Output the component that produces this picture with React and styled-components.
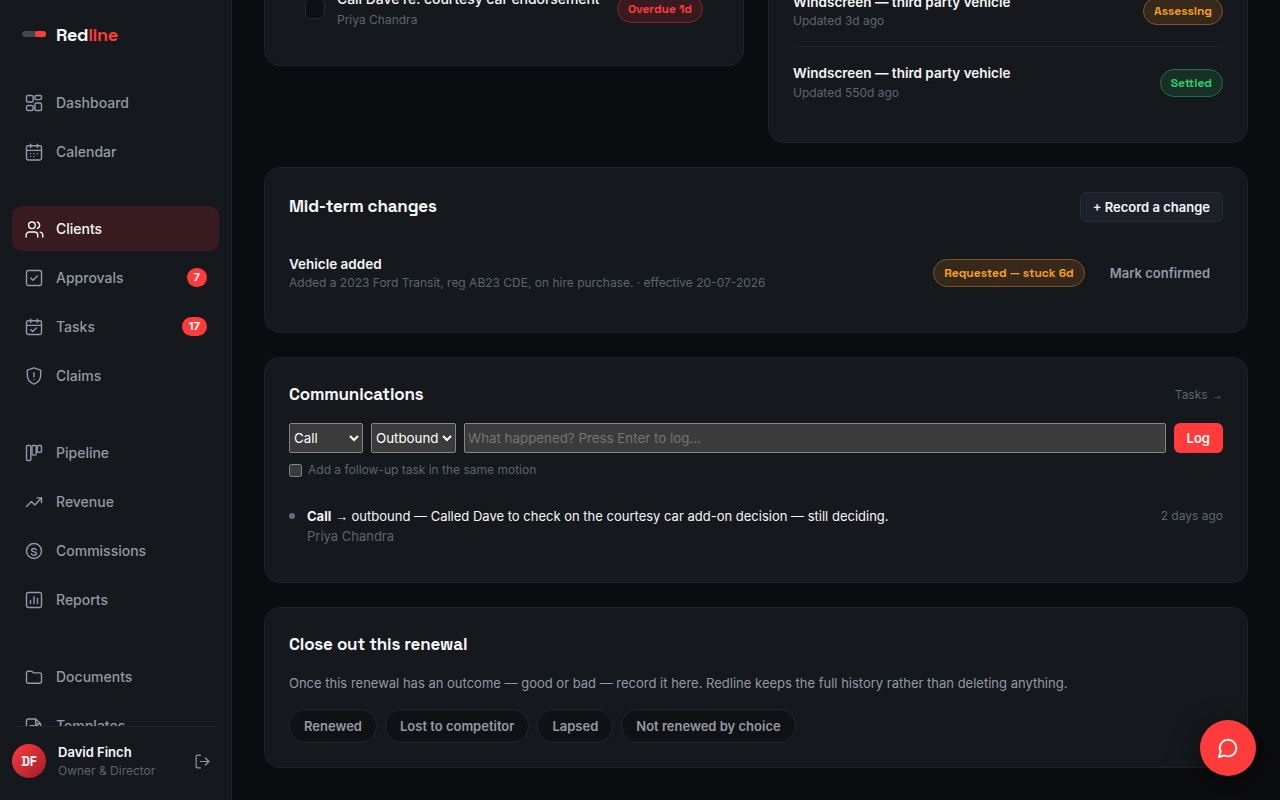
import React, { useState } from "react";
import styled, { createGlobalStyle, css } from "styled-components";

const colors = {
  page: "#0b0c0f",
  panel: "#15181c",
  line: "#1f2329",
  text: "#f5f6f8",
  soft: "#9499a5",
  muted: "#5f646f",
  red: "#ff3b3b",
};

const display = `"Space Grotesk", Inter, sans-serif`;

const icons = {
  dashboard: (
    <>
      <rect x="3" y="3" width="8" height="7.8" rx="1.8" />
      <rect x="13.1" y="3" width="7.9" height="4.9" rx="1.8" />
      <rect x="3" y="15" width="8" height="6" rx="1.8" />
      <rect x="13.1" y="12" width="7.9" height="9" rx="1.8" />
    </>
  ),
  calendar: (
    <>
      <rect x="3" y="4.5" width="18" height="17" rx="2" />
      <path d="M8 2.5v4M16 2.5v4M3 10h18M8 14h.01M12 14h.01M16 14h.01M8 17.5h.01M12 17.5h.01" />
    </>
  ),
  clients: (
    <>
      <circle cx="9.5" cy="7.5" r="4" />
      <path d="M2.5 21.5v-2a4 4 0 0 1 4-4h6a4 4 0 0 1 4 4v2M16 3.7a4 4 0 0 1 0 7.6M22.5 21.5v-2a4 4 0 0 0-3-3.8" />
    </>
  ),
  approvals: (
    <>
      <rect x="3" y="3" width="18" height="18" rx="2" />
      <path d="m8 12 2.8 2.8L16 9.5" />
    </>
  ),
  tasks: (
    <>
      <rect x="3" y="4.5" width="18" height="16.5" rx="2" />
      <path d="M8 2.5v4M16 2.5v4M3 10h18M8.2 15.3l2.2 2.2 4.4-4.3" />
    </>
  ),
  claims: (
    <>
      <path d="M12 2.2 20 5v6.2c0 5-3.3 8.8-8 10.6-4.7-1.8-8-5.6-8-10.6V5z" />
      <path d="M12 8v5M12 16.3h.01" />
    </>
  ),
  pipeline: (
    <>
      <rect x="3" y="3" width="5.2" height="18" rx="1.2" />
      <rect x="9.6" y="3" width="5" height="11.5" rx="1.2" />
      <rect x="16" y="3" width="5" height="8" rx="1.2" />
    </>
  ),
  revenue: <path d="m3 17.5 6-6 4 4L21 7M15.5 7H21v5.5" />,
  commissions: (
    <>
      <circle cx="12" cy="12" r="9" />
      <path d="M14.8 10.6c-.3-1-1.4-1.6-2.8-1.6-1.6 0-2.8.8-2.8 2 0 2.9 5.8 1.3 5.8 4 0 1.3-1.3 2.1-3 2.1-1.5 0-2.7-.7-3-1.7" />
    </>
  ),
  reports: (
    <>
      <rect x="3" y="3" width="18" height="18" rx="2" />
      <path d="M7.8 12.5v3.7M12 8v8.2M16.2 10v6.2" />
    </>
  ),
  documents: (
    <path d="M3 7a2 2 0 0 1 2-2h3.6a2 2 0 0 1 1.5.7L11.4 7H19a2 2 0 0 1 2 2v8.5a2 2 0 0 1-2 2H5a2 2 0 0 1-2-2z" />
  ),
  templates: (
    <path d="M14 3.5H5a2 2 0 0 0-2 2V20a2 2 0 0 0 2 2h13a2 2 0 0 0 2-2V9.5zM14 3.5v6h6M7.5 11.5h9" />
  ),
  logout: <path d="M9 21H5a2 2 0 0 1-2-2V5a2 2 0 0 1 2-2h4M16 17l5-5-5-5M21 12H9" />,
  chat: <path d="M7.9 20A9 9 0 1 0 4 16.1L2 22Z" />,
};

const Icon = ({ name, size = 20, weight = 1.7 }) => (
  <IconStyled
    width={size}
    height={size}
    viewBox="0 0 24 24"
    fill="none"
    stroke="currentColor"
    strokeWidth={weight}
    strokeLinecap="round"
    strokeLinejoin="round"
  >
    {icons[name]}
  </IconStyled>
);

const groups = [
  [
    { icon: "dashboard", label: "Dashboard" },
    { icon: "calendar", label: "Calendar" },
  ],
  [
    { icon: "clients", label: "Clients" },
    { icon: "approvals", label: "Approvals", count: 7 },
    { icon: "tasks", label: "Tasks", count: 17 },
    { icon: "claims", label: "Claims" },
  ],
  [
    { icon: "pipeline", label: "Pipeline" },
    { icon: "revenue", label: "Revenue" },
    { icon: "commissions", label: "Commissions" },
    { icon: "reports", label: "Reports" },
  ],
  [
    { icon: "documents", label: "Documents" },
    { icon: "templates", label: "Templates" },
  ],
];

const claims = [
  { title: "Windscreen — third party vehicle", meta: "Updated 3d ago", status: "Assessing", tone: "amber" },
  { title: "Windscreen — third party vehicle", meta: "Updated 550d ago", status: "Settled", tone: "green" },
];

const outcomes = ["Renewed", "Lost to competitor", "Lapsed", "Not renewed by choice"];

const Sidebar = () => {
  const [active, setActive] = useState("Clients");
  return (
    <SidebarStyled>
      <Brand>
        <BrandMark />
        <BrandName>
          Red<em>line</em>
        </BrandName>
      </Brand>
      <Nav>
        {groups.map((items, i) => (
          <NavGroup key={i}>
            {items.map(({ icon, label, count }) => (
              <NavItem
                key={label}
                $active={active === label}
                onClick={() => setActive(label)}
              >
                <Icon name={icon} />
                <span>{label}</span>
                {count && <Count>{count}</Count>}
              </NavItem>
            ))}
          </NavGroup>
        ))}
      </Nav>
      <Account>
        <Avatar>DF</Avatar>
        <AccountText>
          <strong>David Finch</strong>
          <span>Owner &amp; Director</span>
        </AccountText>
        <LogoutButton aria-label="Log out">
          <Icon name="logout" size={17} />
        </LogoutButton>
      </Account>
    </SidebarStyled>
  );
};

const Communications = () => {
  const [note, setNote] = useState("");
  return (
    <Card $height={226}>
      <CardHeader $height={25} $gap={16}>
        <CardTitle>Communications</CardTitle>
        <CardLink>
          Tasks <Arrow>→</Arrow>
        </CardLink>
      </CardHeader>
      <LogForm onSubmit={(e) => e.preventDefault()}>
        <Select $width={74} defaultValue="Call">
          <option>Call</option>
        </Select>
        <Select $width={85} defaultValue="Outbound">
          <option>Outbound</option>
        </Select>
        <NoteInput
          value={note}
          onChange={(e) => setNote(e.target.value)}
          placeholder="What happened? Press Enter to log..."
        />
        <Button $kind="primary">Log</Button>
      </LogForm>
      <FollowUp>
        <input type="checkbox" />
        <span>Add a follow-up task in the same motion</span>
      </FollowUp>
      <Entry>
        <EntryDot />
        <EntryBody>
          <p>
            <strong>Call</strong> <Arrow>→</Arrow> outbound — Called Dave to
            check on the courtesy car add-on decision — still deciding.
          </p>
          <small>Priya Chandra</small>
        </EntryBody>
        <EntryTime>2 days ago</EntryTime>
      </Entry>
    </Card>
  );
};

const App = () => (
  <Layout>
    <GlobalStyle />
    <Sidebar />
    <Main>
      <Columns>
        <Card $height={106} $bottom>
          <TaskRow>
            <TaskCheck />
            <RowText $gap={3}>
              <TaskTitle>Call Dave re: courtesy car endorsement</TaskTitle>
              <RowMeta>Priya Chandra</RowMeta>
            </RowText>
            <Pill $tone="red">Overdue 1d</Pill>
          </TaskRow>
        </Card>
        <Card $height={183} $bottom>
          {claims.map(({ title, meta, status, tone }, i) => (
            <Row key={status}>
              <RowText $gap={i && 1} $lift={i && 1}>
                <RowTitle>{title}</RowTitle>
                <RowMeta>{meta}</RowMeta>
              </RowText>
              <Pill $tone={tone}>{status}</Pill>
            </Row>
          ))}
        </Card>
      </Columns>
      <Card $height={166}>
        <CardHeader $height={30} $gap={16}>
          <CardTitle>Mid-term changes</CardTitle>
          <Button>+ Record a change</Button>
        </CardHeader>
        <Row>
          <RowText>
            <RowTitle>Vehicle added</RowTitle>
            <RowMeta>
              Added a 2023 Ford Transit, reg AB23 CDE, on hire purchase. ·
              effective 20-07-2026
            </RowMeta>
          </RowText>
          <Pill $tone="amber">Requested — stuck 6d</Pill>
          <Button $kind="ghost">Mark confirmed</Button>
        </Row>
      </Card>
      <Communications />
      <Card $height={161}>
        <CardHeader $height={25} $gap={16}>
          <CardTitle>Close out this renewal</CardTitle>
        </CardHeader>
        <Copy>
          Once this renewal has an outcome — good or bad — record it here.
          Redline keeps the full history rather than deleting anything.
        </Copy>
        <Chips>
          {outcomes.map((label) => (
            <Chip key={label}>{label}</Chip>
          ))}
        </Chips>
      </Card>
    </Main>
    <ChatButton aria-label="Open chat">
      <Icon name="chat" size={22} weight={2} />
    </ChatButton>
  </Layout>
);

export default App;

const GlobalStyle = createGlobalStyle`
  * {
    box-sizing: border-box;
  }
  html {
    color-scheme: dark;
  }
  body {
    margin: 0;
    overflow: hidden;
    background: ${colors.page};
    color: ${colors.text};
    font-family: Inter, sans-serif;
    font-size: 14px;
  }
  button, input, select {
    font-family: inherit;
  }
  p {
    margin: 0;
  }
`;

const Layout = styled.div`
  display: flex;
  height: 100vh;
  overflow: hidden;
`;

const IconStyled = styled.svg`
  display: block;
  flex-shrink: 0;
`;

const Arrow = styled.span`
  font-family: "Liberation Serif", serif;
  line-height: 1;
`;

const SidebarStyled = styled.aside`
  display: flex;
  flex-direction: column;
  flex-shrink: 0;
  width: 232px;
  padding: 24px 12px 22px;
  background: ${colors.panel};
  border-right: 1px solid ${colors.line};
`;

const Brand = styled.div`
  display: flex;
  align-items: center;
  gap: 10px;
  height: 22px;
  padding-left: 10px;
  margin-bottom: 34px;
`;

const BrandMark = styled.span`
  width: 24px;
  height: 6px;
  margin-top: -2px;
  border-radius: 3px;
  background: #45464a;
  &::after {
    content: "";
    display: block;
    width: 11px;
    height: 6px;
    margin-left: auto;
    border-radius: 3px;
    background: ${colors.red};
  }
`;

const BrandName = styled.span`
  margin-top: -2px;
  font-family: ${display};
  font-size: 18px;
  font-weight: 700;
  letter-spacing: -0.36px;
  em {
    font-style: normal;
    color: ${colors.red};
  }
`;

const Nav = styled.nav`
  display: flex;
  flex: 1;
  flex-direction: column;
  gap: 32px;
  min-height: 0;
  overflow: hidden;
`;

const NavGroup = styled.div`
  display: flex;
  flex-direction: column;
  gap: 4px;
`;

const NavItem = styled.a`
  display: flex;
  align-items: center;
  gap: 12px;
  height: 45px;
  padding: 0 12px;
  border-radius: 10px;
  color: ${colors.soft};
  font-size: 14px;
  font-weight: 500;
  cursor: pointer;
  ${(props) =>
    props.$active &&
    css`
      background: #371b1f;
      color: ${colors.text};
    `}
`;

const Count = styled.span`
  margin-left: auto;
  padding: 0 7px;
  border-radius: 10px;
  background: ${colors.red};
  color: #fff;
  font-size: 11px;
  font-weight: 700;
  line-height: 19px;
`;

const Account = styled.div`
  display: flex;
  align-items: center;
  gap: 12px;
  height: 52px;
  padding-top: 17px;
  border-top: 1px solid ${colors.line};
`;

const Avatar = styled.div`
  display: flex;
  align-items: center;
  justify-content: center;
  width: 34px;
  height: 34px;
  border-radius: 50%;
  background: linear-gradient(135deg, #ff3b3b, #9f1d2c);
  color: #fff;
  font-family: ${display};
  font-size: 13px;
  font-weight: 700;
`;

const AccountText = styled.div`
  display: flex;
  flex: 1;
  flex-direction: column;
  strong {
    font-size: 13px;
    font-weight: 600;
    line-height: 19px;
  }
  span {
    color: ${colors.muted};
    font-size: 12px;
    line-height: 18px;
  }
`;

const LogoutButton = styled.button`
  padding: 8px;
  border: 0;
  background: none;
  color: ${colors.soft};
  cursor: pointer;
`;

const Main = styled.main`
  display: flex;
  flex: 1;
  flex-direction: column;
  justify-content: flex-end;
  gap: 24px;
  padding: 0 32px 32px;
`;

const Columns = styled.div`
  display: grid;
  grid-template-columns: 1fr 1fr;
  gap: 24px;
  align-items: start;
`;

const Card = styled.section`
  display: flex;
  flex-direction: column;
  flex-shrink: 0;
  justify-content: ${(props) => (props.$bottom ? "flex-end" : "flex-start")};
  height: ${(props) => props.$height}px;
  padding: 24px;
  border: 1px solid ${colors.line};
  border-radius: 16px;
  background: ${colors.panel};
`;

const CardHeader = styled.header`
  display: flex;
  align-items: center;
  justify-content: space-between;
  height: ${(props) => props.$height}px;
  margin-bottom: ${(props) => props.$gap}px;
`;

const CardTitle = styled.h3`
  margin: 0;
  padding-bottom: 2px;
  font-family: ${display};
  font-size: 17px;
  font-weight: 600;
  letter-spacing: -0.17px;
`;

const CardLink = styled.a`
  color: ${colors.muted};
  font-size: 12px;
`;

const Row = styled.div`
  display: flex;
  align-items: center;
  gap: 12px;
  height: 70px;
  flex-shrink: 0;
  & + & {
    height: 72px;
    padding-top: 1px;
    border-top: 1px solid ${colors.line};
  }
`;

const RowText = styled.div`
  display: flex;
  flex: 1;
  flex-direction: column;
  gap: ${(props) => props.$gap || 0}px;
  padding-bottom: ${(props) => props.$lift || 0}px;
`;

const RowTitle = styled.span`
  font-size: 13.5px;
  font-weight: 600;
  line-height: 20px;
`;

const RowMeta = styled.span`
  color: ${colors.muted};
  font-size: 12px;
  line-height: 18px;
`;

const TaskRow = styled.div`
  display: flex;
  align-items: center;
  gap: 12px;
  flex-shrink: 0;
  padding: 0 16px 12px;
`;

const TaskTitle = styled.span`
  font-size: 14px;
  font-weight: 500;
  letter-spacing: -0.06px;
  line-height: 19px;
`;

const TaskCheck = styled.span`
  width: 20px;
  height: 20px;
  border: 1px solid #262a31;
  border-radius: 5px;
  background: #0e0f12;
`;

const tones = {
  red: ["#ff3b3b", "#371b1f", "#83282c"],
  amber: ["#f59e1f", "#36291c", "#7d561f"],
  green: ["#2ecc6a", "#182f26", "#1f7043"],
};

const Pill = styled.span`
  height: 28px;
  padding: 0 10px;
  border: 1px solid ${(props) => tones[props.$tone][2]};
  border-radius: 14px;
  background: ${(props) => tones[props.$tone][1]};
  color: ${(props) => tones[props.$tone][0]};
  font-family: ${display};
  font-size: 12px;
  font-weight: 700;
  line-height: 26px;
  white-space: nowrap;
`;

const kinds = {
  primary: css`
    background: ${colors.red};
    color: #fff;
  `,
  ghost: css`
    background: none;
    color: ${colors.soft};
  `,
  plain: css`
    border-color: #272b34;
    background: #1c2028;
    color: ${colors.text};
  `,
};

const Button = styled.button`
  height: 30px;
  padding: 0 12px;
  border: 1px solid transparent;
  border-radius: 6px;
  font-size: 13px;
  font-weight: 600;
  white-space: nowrap;
  cursor: pointer;
  ${(props) => kinds[props.$kind || "plain"]}
`;

const LogForm = styled.form`
  display: flex;
  gap: 8px;
  height: 30px;
`;

const Select = styled.select`
  width: ${(props) => props.$width}px;
`;

const NoteInput = styled.input`
  flex: 1;
  min-width: 0;
`;

const FollowUp = styled.label`
  display: flex;
  align-items: center;
  gap: 6px;
  height: 18px;
  margin-top: 8px;
  color: ${colors.muted};
  font-size: 12px;
  input {
    margin: 0;
  }
  span {
    padding-bottom: 2px;
  }
`;

const Entry = styled.div`
  display: flex;
  gap: 12px;
  margin-top: 27px;
`;

const EntryDot = styled.span`
  width: 6px;
  height: 6px;
  margin-top: 7px;
  border-radius: 50%;
  background: #666b77;
`;

const EntryBody = styled.div`
  flex: 1;
  font-size: 13px;
  line-height: 20px;
  p {
    height: 20px;
  }
  small {
    display: block;
    color: ${colors.muted};
    font-size: 13px;
  }
`;

const EntryTime = styled.span`
  color: ${colors.muted};
  font-size: 12px;
  line-height: 20px;
`;

const Copy = styled.p`
  color: ${colors.soft};
  font-size: 13px;
  line-height: 20px;
`;

const Chips = styled.div`
  display: flex;
  gap: 8px;
  margin-top: 16px;
`;

const Chip = styled.button`
  height: 34px;
  padding: 0 14px;
  border: 1px solid #23272d;
  border-radius: 17px;
  background: #0f1114;
  color: ${colors.soft};
  font-size: 13px;
  font-weight: 600;
  cursor: pointer;
`;

const ChatButton = styled.button`
  position: fixed;
  right: 24px;
  bottom: 24px;
  display: flex;
  align-items: center;
  justify-content: center;
  width: 56px;
  height: 56px;
  border: 0;
  border-radius: 50%;
  background: ${colors.red};
  color: #fff;
  box-shadow: 0 8px 32px rgba(0, 0, 0, 0.45);
  cursor: pointer;
`;
